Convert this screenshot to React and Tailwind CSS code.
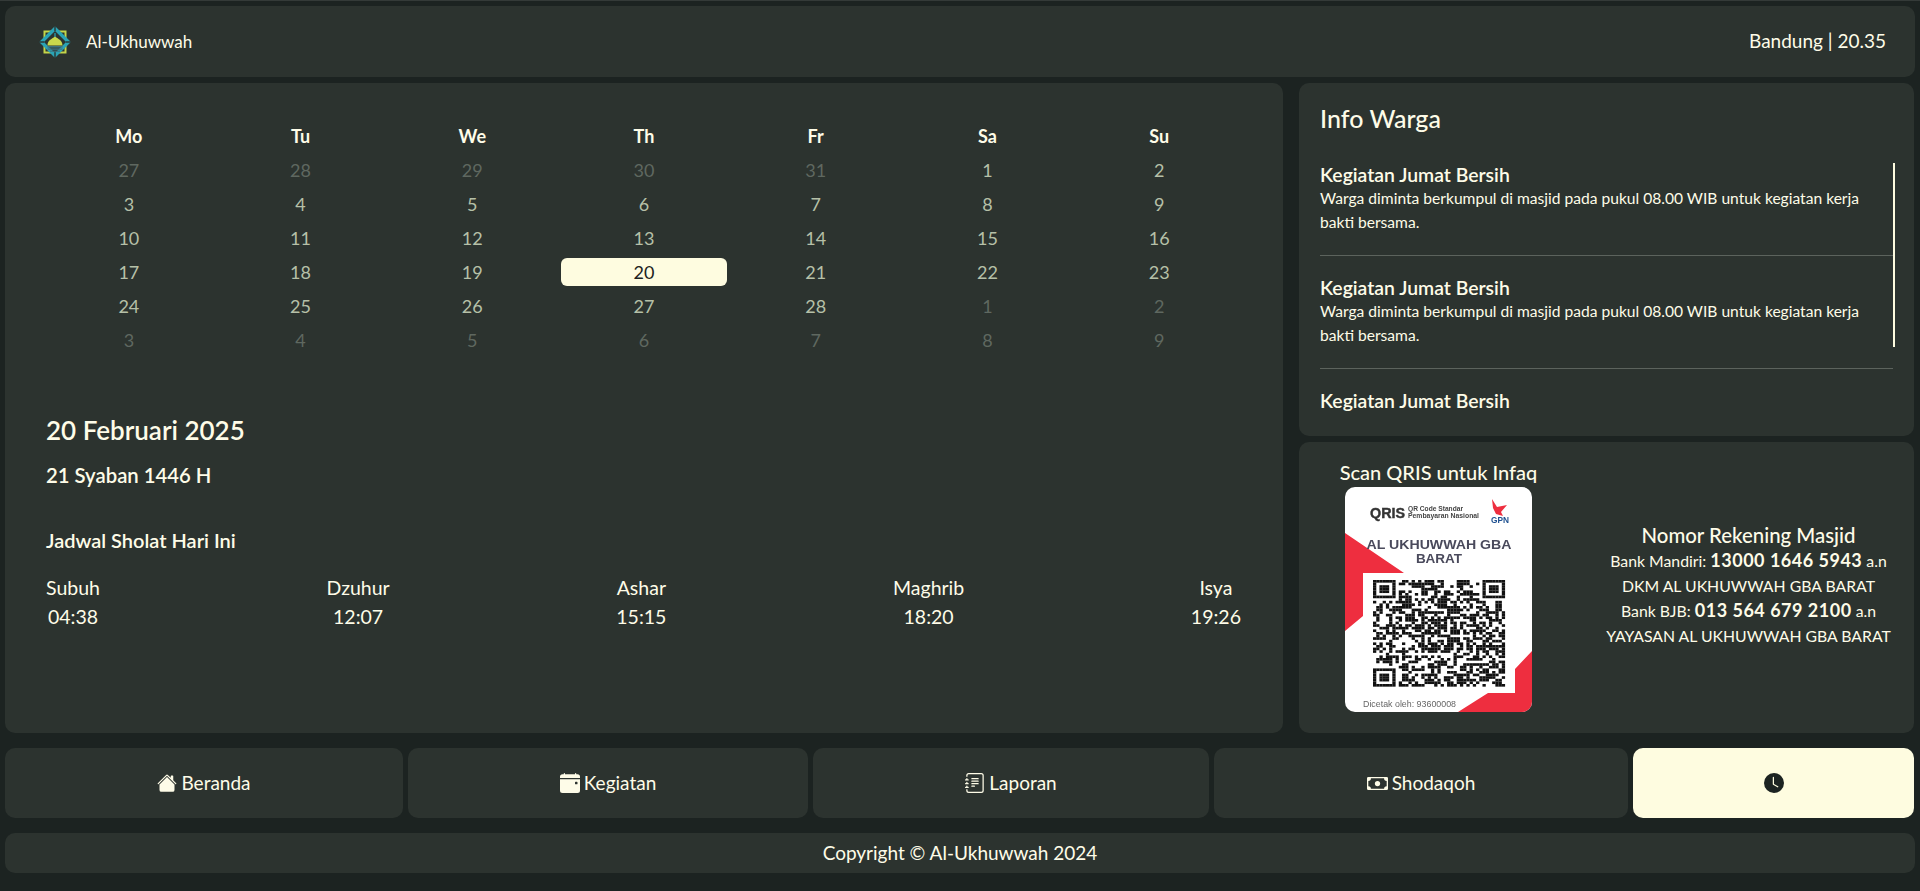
import React from "react";
import { BsHouseFill, BsCalendarEventFill, BsJournalText, BsCash, BsClockFill } from "react-icons/bs";

const FONT = "font-['Lato','Noto_Sans',sans-serif]";
const cream = "text-[#fefce8]";
const card = "bg-[#2c332f] rounded-[10px]";

function Logo() {
  return (
    <svg width="32" height="32" viewBox="0 0 32 32" className="shrink-0">
      <rect x="5.5" y="5.5" width="21" height="21" fill="none" stroke="#c4d64a" strokeWidth="2" />
      <polygon points="16,2.5 29.5,16 16,29.5 2.5,16" fill="#2c332f" stroke="#2aa3b5" strokeWidth="3.4" strokeLinejoin="miter" />
      <rect x="15.3" y="0" width="1.4" height="5" fill="#2c332f" />
      <rect x="15.3" y="27" width="1.4" height="5" fill="#2c332f" />
      <rect x="0" y="15.3" width="5" height="1.4" fill="#2c332f" />
      <rect x="27" y="15.3" width="5" height="1.4" fill="#2c332f" />
      <path d="M8.5 19.5 C8.5 14.5 12.5 13 16 10.5 C19.5 13 23.5 14.5 23.5 19.5 Z" fill="#c8d84c" />
      <rect x="15.4" y="7" width="1.2" height="4" fill="#2aa3b5" />
      <rect x="8.5" y="20" width="15" height="1.6" fill="#3e7480" />
      <rect x="8.5" y="22.4" width="15" height="1.4" fill="#3e7480" />
      <rect x="11" y="24.6" width="10" height="1.2" fill="#3e7480" />
    </svg>
  );
}

const modules = (() => {
  const n = 41;
  const grid = [];
  let s = 12345;
  for (let y = 0; y < n; y++) {
    const row = [];
    for (let x = 0; x < n; x++) {
      s = (s * 1103515245 + 12345) & 0x7fffffff;
      row.push((s >> 16) % 100 < 52);
    }
    grid.push(row);
  }
  const finder = (ox, oy) => {
    for (let y = -1; y < 8; y++) {
      for (let x = -1; x < 8; x++) {
        const gx = ox + x;
        const gy = oy + y;
        if (gx < 0 || gy < 0 || gx >= n || gy >= n) continue;
        const inRing = x >= 0 && x <= 6 && y >= 0 && y <= 6 && (x === 0 || x === 6 || y === 0 || y === 6);
        const inCore = x >= 2 && x <= 4 && y >= 2 && y <= 4;
        grid[gy][gx] = inRing || inCore;
      }
    }
  };
  finder(0, 0);
  finder(n - 7, 0);
  finder(0, n - 7);
  const out = [];
  grid.forEach((row, y) => row.forEach((v, x) => v && out.push([x, y])));
  return out;
})();

function QrisCard() {
  return (
    <svg width="187" height="225" viewBox="0 0 187 225" className="block rounded-[10px] bg-white blur-[0.3px]" style={{ fontFamily: "'Liberation Sans', sans-serif" }}>
      <polygon points="0,46 59,86 18,86 18,129 0,144" fill="#ee2e3f" />
      <polygon points="187,164 187,225 113,225 143,206 170,206 170,182" fill="#ee2e3f" />
      <text x="25" y="31" fontSize="14" fontWeight="700" fill="#333" stroke="#333" strokeWidth="0.4" textLength="35" lengthAdjust="spacingAndGlyphs">QRIS</text>
      <text x="63" y="24" fontSize="6.5" fontWeight="700" fill="#444" textLength="55" lengthAdjust="spacingAndGlyphs">QR Code Standar</text>
      <text x="63" y="31" fontSize="6.5" fontWeight="700" fill="#444" textLength="71" lengthAdjust="spacingAndGlyphs">Pembayaran Nasional</text>
      <polygon points="147,12 152,20 162,18 156,25 158,29 151,27 148,21" fill="#ee2e3f" />
      <text x="146" y="36" fontSize="8.5" fontWeight="700" fill="#1d4f8f" textLength="18" lengthAdjust="spacingAndGlyphs">GPN</text>
      <text x="94" y="62" fontSize="13.5" fontWeight="700" fill="#4a4a5c" textAnchor="middle" textLength="145" lengthAdjust="spacingAndGlyphs">AL UKHUWWAH GBA</text>
      <text x="94" y="76" fontSize="13.5" fontWeight="700" fill="#4a4a5c" textAnchor="middle">BARAT</text>
      <g transform="translate(28 93) scale(3.22 2.6)" fill="#111">
        {modules.map(([x, y]) => (
          <rect key={x + "-" + y} x={x} y={y} width="1.02" height="1.02" />
        ))}
      </g>
      <text x="18" y="220" fontSize="8.5" fill="#666" textLength="93" lengthAdjust="spacingAndGlyphs">Dicetak oleh: 93600008</text>
    </svg>
  );
}

const head = ["Mo", "Tu", "We", "Th", "Fr", "Sa", "Su"];
const days = [
  [27, 1], [28, 1], [29, 1], [30, 1], [31, 1], [1, 0], [2, 0],
  [3, 0], [4, 0], [5, 0], [6, 0], [7, 0], [8, 0], [9, 0],
  [10, 0], [11, 0], [12, 0], [13, 0], [14, 0], [15, 0], [16, 0],
  [17, 0], [18, 0], [19, 0], [20, 2], [21, 0], [22, 0], [23, 0],
  [24, 0], [25, 0], [26, 0], [27, 0], [28, 0], [1, 1], [2, 1],
  [3, 1], [4, 1], [5, 1], [6, 1], [7, 1], [8, 1], [9, 1],
];
const prayers = [["Subuh", "04:38"], ["Dzuhur", "12:07"], ["Ashar", "15:15"], ["Maghrib", "18:20"], ["Isya", "19:26"]];

function Item({ last }) {
  return (
    <div className={last ? "" : "pb-[21px] mb-5 border-b border-[#5c635d]"}>
      <div className="text-[19.4px] leading-[23px] font-semibold">Kegiatan Jumat Bersih</div>
      {!last && (
        <p className="text-[15.6px] leading-6 pr-4">Warga diminta berkumpul di masjid pada pukul 08.00 WIB untuk kegiatan kerja bakti bersama.</p>
      )}
    </div>
  );
}

function NavBtn({ w, Icon, size, label }) {
  return (
    <button className={`${w} ${card} h-full flex items-center justify-center gap-1 text-[19px] ${cream}`}>
      <Icon size={size} />
      <span>{label}</span>
    </button>
  );
}

export default function App() {
  return (
    <div className={`${FONT} ${cream} bg-[#1c2321] h-[891px] overflow-hidden px-[5px] pt-[5px] border-t border-[#343a38] flex flex-col`}>
      <header className={`${card} h-[71px] shrink-0 flex items-center justify-between pl-[34px] pr-[29px]`}>
        <div className="flex items-center gap-[15px]">
          <Logo />
          <span className="text-[17px]">Al-Ukhuwwah</span>
        </div>
        <span className="text-[19px]">Bandung | 20.35</span>
      </header>

      <main className="h-[650px] mt-[6px] shrink-0 flex gap-4">
        <section className={`${card} w-[1278px] shrink-0 px-[41px] pt-[36px]`}>
          <div className="grid grid-cols-7 gap-x-[6px]">
            {head.map((d) => (
              <div key={d} className="h-[34px] flex items-center justify-center text-[18px] font-bold">{d}</div>
            ))}
            {days.map(([d, k], i) => (
              <div key={i} className="h-[34px] flex items-center justify-center">
                <div className={
                  "w-full h-7 rounded-md flex items-center justify-center text-[18px] " +
                  (k === 2 ? "bg-[#fefce0] text-[#1c2321]" : k === 1 ? "text-[#5f6860]" : "text-[#b6c0a8]")
                }>{d}</div>
              </div>
            ))}
          </div>
          <h1 className="mt-[55px] text-[26px] leading-9 font-semibold">20 Februari 2025</h1>
          <h2 className="mt-[13px] text-[20.3px] leading-7 font-semibold">21 Syaban 1446 H</h2>
          <h3 className="mt-[37px] text-[20px] leading-7 font-semibold">Jadwal Sholat Hari Ini</h3>
          <div className="mt-[19px] flex justify-between pr-[1px]">
            {prayers.map(([n, t]) => (
              <div key={n} className="text-center text-[19.5px] leading-[29px]">
                <div>{n}</div>
                <div>{t}</div>
              </div>
            ))}
          </div>
        </section>

        <div className="w-[615px] shrink-0 flex flex-col gap-[6px]">
          <section className={`${card} h-[353px] shrink-0 pl-[21px] pr-[21px] pt-[20px] relative overflow-hidden`}>
            <h2 className="text-[25px] leading-[30px] font-medium">Info Warga</h2>
            <div className="mt-[30px]">
              <Item />
              <Item />
              <Item last />
            </div>
            <div className="absolute left-[594px] top-[80px] w-[2px] h-[184px] bg-[#fefce0]" />
          </section>
          <section className={`${card} flex-1 flex items-start`}>
            <div className="w-[275px] shrink-0 pt-[17px] flex flex-col items-center pl-[4px]">
              <div className="text-[20px] leading-[26px] font-medium">Scan QRIS untuk Infaq</div>
              <div className="mt-[2px]"><QrisCard /></div>
            </div>
            <div className="flex-1 pt-[80px] text-center text-[15.8px] leading-[25px] pl-[9px]">
              <div className="text-[20.4px] leading-[26px] font-medium">Nomor Rekening Masjid</div>
              <div>Bank Mandiri: <b className="text-[18px] font-bold tracking-[0.5px]">13000 1646 5943</b> a.n</div>
              <div>DKM AL UKHUWWAH GBA BARAT</div>
              <div>Bank BJB: <b className="text-[18px] font-bold tracking-[0.5px]">013 564 679 2100</b> a.n</div>
              <div>YAYASAN AL UKHUWWAH GBA BARAT</div>
            </div>
          </section>
        </div>
      </main>

      <nav className="h-[70px] mt-[15px] shrink-0 flex gap-[5px]">
        <NavBtn w="w-[398px]" Icon={BsHouseFill} size={20} label="Beranda" />
        <NavBtn w="w-[400px]" Icon={BsCalendarEventFill} size={20} label="Kegiatan" />
        <NavBtn w="w-[396px]" Icon={BsJournalText} size={20} label="Laporan" />
        <NavBtn w="w-[414px]" Icon={BsCash} size={21} label="Shodaqoh" />
        <button className="w-[281px] h-full rounded-[10px] bg-[#fefce0] flex items-center justify-center text-[#1c2321]">
          <BsClockFill size={20} />
        </button>
      </nav>

      <footer className={`${card} h-10 mt-[15px] shrink-0 flex items-center justify-center text-[19px]`}>
        Copyright © Al-Ukhuwwah 2024
      </footer>
    </div>
  );
}
